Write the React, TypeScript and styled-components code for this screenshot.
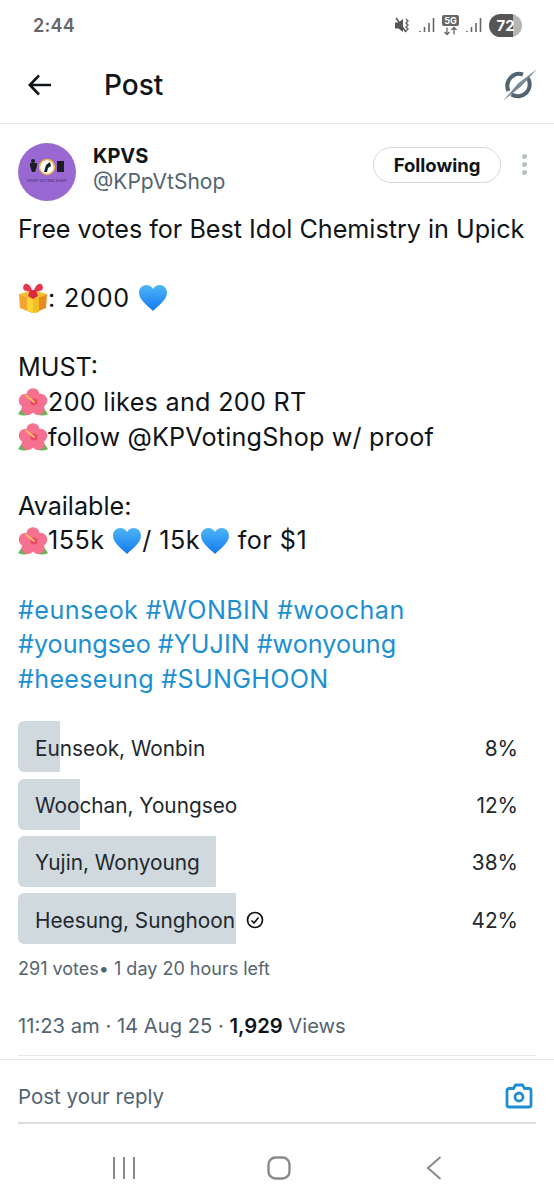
import React from "react";
import styled, { createGlobalStyle } from "styled-components";

const GlobalStyle = createGlobalStyle`
  html, body {
    margin: 0;
    padding: 0;
    background: #fff;
  }
  body {
    font-family: "Inter", "Liberation Sans", sans-serif;
    color: #0f1419;
  }
`;

const Page = styled.div`
  width: 554px;
  height: 1200px;
  display: flex;
  flex-direction: column;
  overflow: hidden;
`;

const StatusBar = styled.div`
  height: 50px;
  padding: 0 33px 0 33px;
  display: flex;
  align-items: center;
  justify-content: space-between;
  box-sizing: border-box;
`;

const Time = styled.span`
  font-size: 18px;
  font-weight: 600;
  color: #666;
  letter-spacing: 0.3px;
`;

const StatusIcons = styled.div`
  display: flex;
  align-items: center;
  gap: 7px;
  margin-right: -1px;
`;

const Battery = styled.div`
  width: 33px;
  height: 23px;
  border-radius: 12px;
  background: linear-gradient(90deg, #555 0 72%, #b5b5b5 72% 100%);
  color: #fff;
  font-size: 15px;
  font-weight: 700;
  display: flex;
  align-items: center;
  justify-content: center;
`;

const Header = styled.header`
  height: 74px;
  box-sizing: border-box;
  border-bottom: 1px solid #e6e9eb;
  padding: 0 16px 4px 28px;
  display: flex;
  align-items: center;
`;

const HeaderTitle = styled.h1`
  margin: 0 0 0 52px;
  font-size: 28px;
  font-weight: 500;
  flex: 1;
`;

const Post = styled.main`
  padding: 0 18px;
  display: flex;
  flex-direction: column;
`;

const AuthorRow = styled.div`
  height: 95px;
  display: flex;
  align-items: center;
  padding-top: 1px;
  box-sizing: border-box;
`;

const Avatar = styled.svg`
  width: 58px;
  height: 58px;
  flex: none;
`;

const AuthorText = styled.div`
  margin-left: 17px;
  flex: 1;
  display: flex;
  flex-direction: column;
  gap: 1px;
  margin-top: -6px;
`;

const AuthorName = styled.span`
  font-size: 20px;
  font-weight: 700;
  line-height: 24px;
`;

const AuthorHandle = styled.span`
  font-size: 21px;
  line-height: 25px;
  color: #536471;
`;

const FollowButton = styled.button`
  width: 128px;
  height: 36px;
  margin-top: -15px;
  border: 1px solid #cfd9de;
  border-radius: 18px;
  background: #fff;
  font: 700 18.5px "Inter", sans-serif;
  color: #0f1419;
  padding: 0;
`;

const MoreDots = styled.div`
  width: 5px;
  margin: -15px 9px 0 21px;
  display: flex;
  flex-direction: column;
  gap: 3px;
  span {
    width: 5px;
    height: 5px;
    border-radius: 50%;
    background: #b9c2c8;
  }
`;

const Body = styled.div`
  margin-top: -7px;
  font-size: 25.15px;
  line-height: 34.6px;
`;

const Line = styled.div<{ $track?: number }>`
  height: 34.6px;
  white-space: nowrap;
  display: flex;
  align-items: center;
  letter-spacing: ${(p) => p.$track ?? 0}px;
`;

const Tag = styled.div<{ $track?: number }>`
  height: 34.6px;
  white-space: nowrap;
  color: #1d8fd2;
  letter-spacing: ${(p) => p.$track ?? 0}px;
`;

const Emoji = styled.svg`
  width: 30px;
  height: 30px;
  flex: none;
`;

const Pre = styled.span`
  white-space: pre;
`;

const Poll = styled.div`
  margin-top: 25px;
  display: flex;
  flex-direction: column;
  gap: 6.3px;
`;

const PollRow = styled.div`
  position: relative;
  height: 51px;
  box-sizing: border-box;
  padding: 3px 18px 0 17px;
  display: flex;
  align-items: center;
  justify-content: space-between;
  font-size: 20.8px;
  color: #22282d;
`;

const PollBar = styled.div`
  position: absolute;
  left: 0;
  top: 0;
  bottom: 0;
  background: #cfd9de;
  border-radius: 6px 0 0 6px;
`;

const PollLabel = styled.span`
  position: relative;
  display: flex;
  align-items: center;
  gap: 11px;
`;

const PollPct = styled.span`
  position: relative;
`;

const PollInfo = styled.div`
  margin-top: 14px;
  font-size: 18px;
  line-height: 22px;
  color: #536471;
`;

const Meta = styled.div`
  margin-top: 33px;
  font-size: 20.2px;
  line-height: 26px;
  color: #536471;
  b {
    color: #0f1419;
    font-weight: 600;
  }
`;

const InsetRule = styled.div`
  margin-top: 16px;
  height: 1px;
  background: #e6e9eb;
`;

const Composer = styled.div`
  margin-top: 3px;
  border-top: 1px solid #e6e9eb;
  display: flex;
  flex-direction: column;
`;

const ComposerInner = styled.div`
  margin: 0 18px;
  height: 64px;
  padding: 10px 3px 0 0;
  box-sizing: border-box;
  border-bottom: 2px solid #d9dee1;
  display: flex;
  align-items: center;
  justify-content: space-between;
  font-size: 20.5px;
  color: #536471;
`;

const NavBar = styled.nav`
  flex: 1;
  display: grid;
  grid-template-columns: repeat(3, 155px);
  justify-items: center;
  align-items: center;
  padding-left: 46.5px;
  margin-top: 12px;
`;

const poll = [
  { label: "Eunseok, Wonbin", pct: 8 },
  { label: "Woochan, Youngseo", pct: 12 },
  { label: "Yujin, Wonyoung", pct: 38 },
  { label: "Heesung, Sunghoon", pct: 42, chosen: true },
];

const Hibiscus = () => (
  <Emoji viewBox="0 0 30 30">
    <path d="M0 27 L7 17 L12 27 Q6 30 0 27Z" fill="#6fb257" />
    <path d="M30 27 L23 17 L18 27 Q24 30 30 27Z" fill="#6fb257" />
    <g fill="#f6718f">
      <circle cx="15" cy="8" r="6.8" />
      <circle cx="7.500" cy="13.500" r="6.800" />
      <circle cx="22.500" cy="13.500" r="6.800" />
      <circle cx="10" cy="21.500" r="6.500" />
      <circle cx="20" cy="21.500" r="6.500" />
    </g>
    <circle cx="16" cy="15" r="3.500" fill="#ea4a6c" />
    <path d="M16 15 L8 8.500" stroke="#f6c25c" strokeWidth="1.800" strokeLinecap="round" />
  </Emoji>
);

const BlueHeart = () => (
  <Emoji viewBox="0 0 30 30">
    <defs>
      <linearGradient id="heartFill" x1="0" y1="0" x2="0" y2="1">
        <stop offset="0" stopColor="#4db6f6" />
        <stop offset="1" stopColor="#1479f0" />
      </linearGradient>
    </defs>
    <path
      d="M15 28 C9 22 1 17 1 9.500 C1 5 4.500 2 8.200 2 C11 2 13.500 3.500 15 6 C16.500 3.500 19 2 21.800 2 C25.500 2 29 5 29 9.500 C29 17 21 22 15 28Z"
      fill="url(#heartFill)"
    />
  </Emoji>
);

const Gift = () => (
  <Emoji viewBox="0 0 30 30">
    <path d="M1 11 L14 16 V30 L2 25z" fill="#f4a52d" />
    <path d="M29 11 L16 16 V30 L28 25z" fill="#e98a1f" />
    <path d="M15 7 L29 11 L15 17 L1 11z" fill="#fbc02f" />
    <path d="M9 14 L15 16.500 L21 14 V29 L15 30 L9 27.500z" fill="#fcd535" />
    <path d="M15 16.500 L21 14 V29 L15 30z" fill="#f5bd25" />
    <path d="M14 8 C8 9 3 7 6 2 C8 -1 13 2 14 8Z" fill="#e8354c" />
    <path d="M16 8 C22 9 27 7 24 2 C22 -1 17 2 16 8Z" fill="#e8354c" />
    <path d="M12 7h6l2 6-5 3-5-3z" fill="#d92a42" />
  </Emoji>
);

const App = () => {
  return (
    <Page>
      <GlobalStyle />
      <StatusBar>
        <Time>2:44</Time>
        <StatusIcons>
          <svg width="17" height="17" viewBox="0 0 17 17">
            <path d="M0 5.500h3.500L8 2v13l-4.500-3.500H0z" fill="#555" />
            <path d="M1 1l10 14" stroke="#555" strokeWidth="1.600" />
            <path d="M11 2l2 2-2 2 2 2-2 2 2 2-2 2" stroke="#666" strokeWidth="1.400" fill="none" />
          </svg>
          <svg width="16" height="17" viewBox="0 0 16 17">
            <path d="M1 14v1M5.500 10v5M10 6v9M14.500 1v14" stroke="#666" strokeWidth="1.600" />
          </svg>
          <svg width="17" height="21" viewBox="0 0 17 21">
            <rect width="17" height="11" rx="2" fill="#666" />
            <text x="8.500" y="9" textAnchor="middle" fontSize="9" fontWeight="700" fill="#fff" fontFamily="Inter">5G</text>
            <path d="M5 12.500v7M2.500 17l2.500 2.500L7.500 17M12 19.500v-7M9.500 15l2.500-2.500L14.500 15" stroke="#666" strokeWidth="1.300" fill="none" />
          </svg>
          <svg width="16" height="17" viewBox="0 0 16 17">
            <path d="M1 14v1M5.500 10v5M10 6v9M14.500 1v14" stroke="#666" strokeWidth="1.600" />
          </svg>
          <Battery>72</Battery>
        </StatusIcons>
      </StatusBar>

      <Header>
        <svg width="24" height="22" viewBox="0 0 24 22">
          <path d="M23 11H2M11 1.500L1.800 11l9.200 9.500" stroke="#0f1419" strokeWidth="2.600" fill="none" />
        </svg>
        <HeaderTitle>Post</HeaderTitle>
        <svg width="36" height="34" viewBox="0 0 36 34">
          <path d="M21 6.500A12 12 0 0 0 6.500 23" stroke="#536471" strokeWidth="4" fill="none" />
          <path d="M9.500 26.500A12 12 0 0 0 26 10" stroke="#536471" strokeWidth="4" fill="none" />
          <path d="M35 1L16 15.500l3 3zM1 33l18-14.500-3-3z" fill="#7a8a96" />
        </svg>
      </Header>

      <Post>
        <AuthorRow>
          <Avatar viewBox="0 0 58 58">
            <circle cx="29" cy="29" r="29" fill="#9a68d2" />
            <circle cx="29" cy="24" r="7.500" fill="#fff" stroke="#f2b33d" strokeWidth="1.500" />
            <path d="M26 29l2-7 4-3 1 4-3 2-1 4z" fill="#1c1c22" />
            <path d="M12 20h7v3l-2 6h-3l-2-6z" fill="#1c1c22" />
            <circle cx="15" cy="18" r="2" fill="#1c1c22" />
            <rect x="39" y="18" width="7" height="11" fill="#1c1c22" />
            <text x="29" y="39" textAnchor="middle" fontSize="4" fill="#3d2a63" fontFamily="Inter">KPOP VOTING SHOP</text>
          </Avatar>
          <AuthorText>
            <AuthorName>KPVS</AuthorName>
            <AuthorHandle>@KPpVtShop</AuthorHandle>
          </AuthorText>
          <FollowButton>Following</FollowButton>
          <MoreDots>
            <span />
            <span />
            <span />
          </MoreDots>
        </AuthorRow>

        <Body>
          <Line>Free votes for Best Idol Chemistry in Upick</Line>
          <Line />
          <Line $track={0.8}>
            <Gift />
            <Pre>: 2000 </Pre>
            <BlueHeart />
          </Line>
          <Line />
          <Line>MUST:</Line>
          <Line $track={0.3}>
            <Hibiscus />
            200 likes and 200 RT
          </Line>
          <Line $track={0.2}>
            <Hibiscus />
            <Pre>follow @KPVotingShop w/ proof</Pre>
          </Line>
          <Line />
          <Line>Available:</Line>
          <Line $track={0.5}>
            <Hibiscus />
            <Pre>155k </Pre>
            <BlueHeart />
            <Pre>/ 15k</Pre>
            <BlueHeart />
            <Pre> for $1</Pre>
          </Line>
          <Line />
          <Tag $track={0.4}>#eunseok #WONBIN #woochan</Tag>
          <Tag>#youngseo #YUJIN #wonyoung</Tag>
          <Tag $track={0.3}>#heeseung #SUNGHOON</Tag>
        </Body>

        <Poll>
          {poll.map((row) => (
            <PollRow key={row.label}>
              <PollBar style={{ width: `${row.pct * 5.2}px` }} />
              <PollLabel>
                {row.label}
                {row.chosen && (
                  <svg width="18" height="18" viewBox="0 0 18 18">
                    <circle cx="9" cy="9" r="7.500" stroke="#0f1419" strokeWidth="1.700" fill="none" />
                    <path d="M5.500 9.500l2.500 2.500 4.500-5.500" stroke="#0f1419" strokeWidth="1.700" fill="none" />
                  </svg>
                )}
              </PollLabel>
              <PollPct>{row.pct}%</PollPct>
            </PollRow>
          ))}
        </Poll>

        <PollInfo>291 votes• 1 day 20 hours left</PollInfo>
        <Meta>
          11:23 am · 14 Aug 25 · <b>1,929</b> Views
        </Meta>
        <InsetRule />
      </Post>

      <Composer>
        <ComposerInner>
          Post your reply
          <svg width="28" height="26" viewBox="0 0 28 26">
            <path
              d="M2 7.500a2 2 0 0 1 2-2h4.500L10.500 2h7l2 3.500H24a2 2 0 0 1 2 2V22a2 2 0 0 1-2 2H4a2 2 0 0 1-2-2z"
              stroke="#1d8fd2"
              strokeWidth="2.800"
              fill="none"
            />
            <circle cx="14" cy="14" r="4" stroke="#1d8fd2" strokeWidth="2.800" fill="none" />
          </svg>
        </ComposerInner>
      </Composer>

      <NavBar>
        <svg width="24" height="22" viewBox="0 0 24 22">
          <path d="M2 0v22M12 0v22M22 0v22" stroke="#8a8a8a" strokeWidth="2" />
        </svg>
        <svg width="24" height="24" viewBox="0 0 24 24">
          <rect x="1.500" y="1.500" width="21" height="21" rx="7" stroke="#8a8a8a" strokeWidth="2.400" fill="none" />
        </svg>
        <svg width="16" height="24" viewBox="0 0 16 24">
          <path d="M14.500 1L2 12l12.500 11" stroke="#8a8a8a" strokeWidth="2" fill="none" />
        </svg>
      </NavBar>
    </Page>
  );
};

export default App;
